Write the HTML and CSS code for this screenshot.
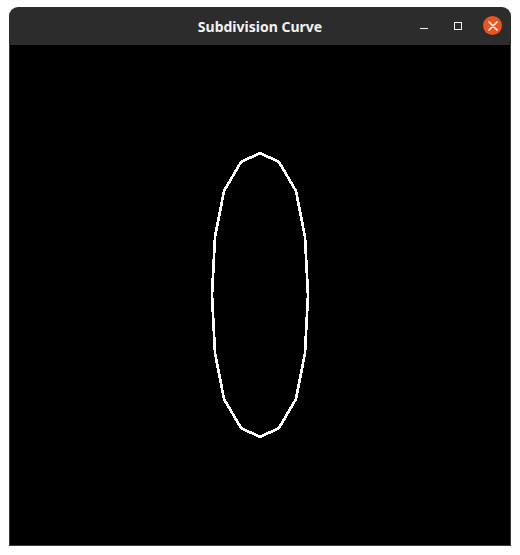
FILE: index.html
```html
<!DOCTYPE html>
<html>
<head>
<meta charset="utf-8">
<title>Subdivision Curve</title>
<link rel="stylesheet" href="styles.css">
</head>
<body>
<div class="window">
  <div class="titlebar">
    <span class="title">Subdivision Curve</span>
    <div class="controls">
      <span class="btn btn-min"></span>
      <span class="btn btn-max"></span>
      <span class="btn btn-close">
        <svg width="10" height="10" viewBox="0 0 10 10"><path d="M1 1 L9 9 M9 1 L1 9" stroke="#fff" stroke-width="1.6" stroke-linecap="round"/></svg>
      </span>
    </div>
  </div>
  <div class="canvas">
    <svg width="500" height="500" viewBox="0 0 500 500" shape-rendering="crispEdges">
      <polygon points="250,108 231,117 214,146 205,192 202,250 205,308 214,354 231,383 250,392 269,383 286,354 295,308 298,250 295,192 286,146 269,117" fill="none" stroke="#fff" stroke-width="2.7" stroke-linejoin="miter"/>
    </svg>
  </div>
</div>
</body>
</html>
```

FILE: styles.css
```css
html, body {
  margin: 0;
  padding: 0;
  background: #ffffff;
}
.window {
  margin-left: 9px;
  margin-top: 7px;
  width: 502px;
}
.titlebar {
  position: relative;
  height: 38px;
  background: #2c2c2c;
  border-radius: 9px 9px 0 0;
  display: flex;
  align-items: center;
  justify-content: center;
}
.title {
  font-family: "Noto Sans", "DejaVu Sans", sans-serif;
  font-weight: bold;
  font-size: 14px;
  color: #f2f2f2;
  margin-top: 1px;
}
.controls {
  position: absolute;
  right: 9px;
  top: 9px;
  display: flex;
  align-items: center;
  gap: 0;
}
.btn {
  display: block;
}
.btn-min {
  width: 8px;
  height: 1px;
  background: #f2f2f2;
  margin-top: 6px;
  margin-right: 26px;
}
.btn-max {
  width: 6px;
  height: 6px;
  border: 1px solid #f2f2f2;
  margin-right: 21px;
}
.btn-close {
  width: 19px;
  height: 19px;
  border-radius: 50%;
  background: #e95420;
  display: flex;
  align-items: center;
  justify-content: center;
}
.btn-close svg {
  display: block;
}
.canvas {
  background: #000;
  border: 1px solid #3b3b3b;
  border-top: none;
  width: 500px;
  height: 500px;
}
.canvas svg {
  display: block;
}
```
